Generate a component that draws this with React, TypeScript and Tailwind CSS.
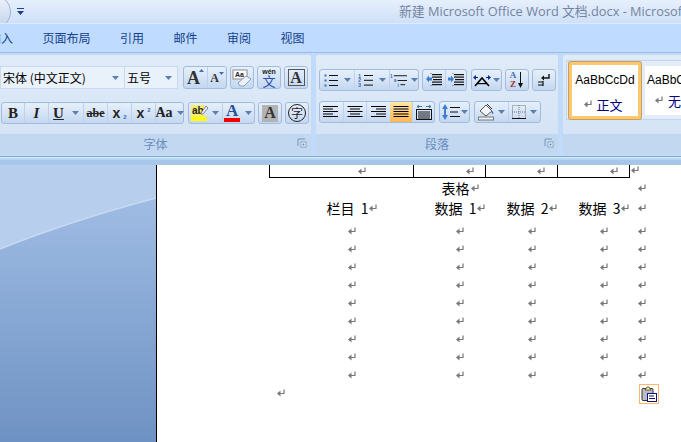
import React from "react";

const cjk = "font-['Noto_Sans_CJK_SC',sans-serif]";

function Ret({ className = "" }: { className?: string }) {
  return (
    <svg width="8" height="8" viewBox="0 0 8 8" className={`shrink-0 ${className}`}>
      <path d="M7 0.5V4.5H2" stroke="#777" strokeWidth="1.2" fill="none" />
      <path d="M3.5 1.5L0 4.5L3.5 7.5Z" fill="#777" />
    </svg>
  );
}

function Caret({ className = "" }: { className?: string }) {
  return (
    <svg width="7" height="4" viewBox="0 0 7 4" className={`shrink-0 ${className}`}>
      <path d="M0 0H7L3.5 4Z" fill="#5b7fb0" />
    </svg>
  );
}

function Group({ className = "", children }: { className?: string; children: React.ReactNode }) {
  return (
    <div className={`flex h-full rounded-[3px] border border-[#a3bbdc] bg-gradient-to-b from-[#e6f0fb] via-[#d6e4f6] to-[#c3d7f0] ${className}`}>
      {children}
    </div>
  );
}

function Cell({ className = "", children }: { className?: string; children?: React.ReactNode }) {
  return (
    <div className={`flex h-full items-center justify-center gap-[3px] border-l border-[#bfd1ea] first:border-l-0 ${className}`}>
      {children}
    </div>
  );
}

function Lines({ kind }: { kind: "left" | "center" | "right" | "justify" }) {
  const rows = [15, 10, 15, 10, 15];
  return (
    <svg width="16" height="12" viewBox="0 0 16 12">
      {rows.map((w, i) => {
        const width = kind === "justify" ? 15 : w;
        const left = kind === "center" ? (16 - width) / 2 : kind === "right" ? 16 - width : kind === "justify" ? 0.5 : 0;
        return <rect key={i} x={left} y={i * 2.5} width={width} height="1" fill="#000" />;
      })}
    </svg>
  );
}

function Launcher() {
  return (
    <svg width="10" height="10" viewBox="0 0 10 10">
      <path d="M1 8V1H8" stroke="#7b93b6" fill="none" />
      <rect x="4" y="4" width="5" height="5" fill="#fff" stroke="#7f9fc9" />
      <rect x="5.5" y="5.5" width="2" height="2" fill="#5b86bd" />
    </svg>
  );
}

function RibbonGroup({ label, className = "", launcher, children }: { label: string; className?: string; launcher?: boolean; children: React.ReactNode }) {
  return (
    <div className={`flex h-full shrink-0 flex-col overflow-hidden rounded-[3px] border border-[#c5d9f0] bg-gradient-to-b from-[#e0ebf8] to-[#d2e2f5] ${className}`}>
      <div className="flex-1">{children}</div>
      <div className={`flex h-[20px] items-center justify-center bg-[#c1d8f0] ${cjk} relative text-[12px] text-[#6a8cbf]`}>
        {label}
        {launcher && (
          <div className="absolute right-[4px] top-[4px] flex">
            <Launcher />
          </div>
        )}
      </div>
    </div>
  );
}

function FontGroup() {
  return (
    <RibbonGroup label="字体" launcher className="w-[312px] rounded-l-none border-l-0">
      <div className="mt-[11px] flex h-[23px] items-start">
        <div className={`flex h-[23px] w-[125px] items-center justify-between border border-[#c8daf0] bg-[#e9f1fb] pl-[2px] pr-[5px] ${cjk} text-[12px] text-black`}>
          宋体 (中文正文)
          <Caret />
        </div>
        <div className={`flex h-[23px] w-[53px] items-center justify-between border border-l-0 border-[#c8daf0] bg-[#e9f1fb] pl-[2px] pr-[5px] ${cjk} text-[12px] text-black`}>
          五号
          <Caret />
        </div>
        <Group className="ml-[5px] h-[22px] w-[44px]">
          <Cell className="w-[23px] font-['Liberation_Serif',serif] text-[18px] font-bold leading-none text-[#333]">
            <span className="relative pr-[4px]">
              A
              <svg width="5" height="3" viewBox="0 0 5 3" className="absolute right-0 top-0">
                <path d="M0 3H5L2.5 0Z" fill="#3f6fb0" />
              </svg>
            </span>
          </Cell>
          <Cell className="w-[19px] font-['Liberation_Serif',serif] text-[12px] font-bold leading-none text-[#333]">
            <span className="relative pr-[5px]">
              A
              <svg width="5" height="3" viewBox="0 0 5 3" className="absolute right-0 top-0">
                <path d="M0 0H5L2.5 3Z" fill="#3f6fb0" />
              </svg>
            </span>
          </Cell>
        </Group>
        <Group className="ml-[3px] h-[22px] w-[24px] items-center justify-center">
          <svg width="20" height="18" viewBox="0 0 20 18">
            <rect x="1" y="1" width="14" height="9" fill="#fff" stroke="#8a8a8a" />
            <text x="3" y="8" fontSize="7" fontWeight="bold" fontFamily="Liberation Sans" fill="#222">Aa</text>
            <path d="M6 14L14 7L19 10L12 17H8Z" fill="#eef1f6" stroke="#8ba0bd" />
          </svg>
        </Group>
        <Group className="ml-[3px] h-[22px] w-[24px] flex-col items-center justify-center font-['Liberation_Sans',sans-serif] leading-none">
          <span className="text-[7px] font-bold leading-[7px] text-[#222]">wén</span>
          <span className={`${cjk} text-[13px] leading-[12px] text-[#2a4fb0]`}>文</span>
        </Group>
        <Group className="ml-[3px] h-[22px] w-[24px] items-center justify-center">
          <span className="flex h-[17px] w-[17px] items-center justify-center border border-[#555] font-['Liberation_Serif',serif] text-[16px] font-bold leading-none text-[#333]">
            A
          </span>
        </Group>
      </div>
      <div className="mt-[13px] flex h-[22px] items-start">
        <Group className="ml-[1px] h-[22px] w-[183px] font-['Liberation_Serif',serif] leading-none text-[#222]">
          <Cell className="w-[22px] text-[15px] font-bold">B</Cell>
          <Cell className="w-[24px] text-[15px] font-bold italic">I</Cell>
          <Cell className="w-[35px] text-[15px] font-bold">
            <span className="underline">U</span>
            <Caret className="ml-[5px]" />
          </Cell>
          <Cell className="w-[24px] text-[12px] font-bold line-through">abe</Cell>
          <Cell className="w-[24px] gap-0 font-['Liberation_Sans',sans-serif] text-[14px] font-bold">
            x<span className="mt-[7px] text-[6px] text-[#3f6fb0]">2</span>
          </Cell>
          <Cell className="w-[24px] gap-0 font-['Liberation_Sans',sans-serif] text-[14px] font-bold">
            x<span className="mb-[7px] text-[6px] text-[#3f6fb0]">2</span>
          </Cell>
          <Cell className="w-[28px] gap-0 text-[14px] font-bold">
            Aa
            <Caret className="ml-[1px]" />
          </Cell>
        </Group>
        <Group className="ml-[4px] h-[22px] w-[67px]">
          <Cell className="w-[33px] gap-[2px]">
            <span className="relative flex w-[18px] flex-col items-start font-['Liberation_Sans',sans-serif] text-[10px] font-bold leading-[12px] text-[#222]">
              <span className="w-[13px] bg-[#f2ee6c] text-center">ab</span>
              <svg width="9" height="10" viewBox="0 0 9 10" className="absolute right-0 top-0">
                <path d="M1 8L6 1L8 3L3 9H1Z" fill="#eef3fa" stroke="#667" strokeWidth="0.8" />
              </svg>
              <span className="h-[4px] w-[16px] bg-[#ffff00]" />
            </span>
            <Caret />
          </Cell>
          <Cell className="w-[33px]">
            <span className="flex w-[16px] flex-col items-center font-['Liberation_Serif',serif] text-[17px] font-bold leading-[14px] text-[#2a4f98]">
              A
              <span className="h-[4px] w-[16px] bg-[#f00000]" />
            </span>
            <Caret className="ml-[2px]" />
          </Cell>
        </Group>
        <Group className="ml-[3px] h-[22px] w-[24px] items-center justify-center">
          <span className="flex h-[17px] w-[16px] items-center justify-center bg-[#b3b3b3] font-['Liberation_Serif',serif] text-[16px] font-bold leading-none text-[#333]">
            A
          </span>
        </Group>
        <Group className="ml-[3px] h-[22px] w-[24px] items-center justify-center">
          <span className={`flex h-[18px] w-[18px] items-center justify-center rounded-full border border-[#222] ${cjk} text-[12px] leading-none text-[#222]`}>
            字
          </span>
        </Group>
      </div>
    </RibbonGroup>
  );
}

const Dots = () => (
  <svg width="14" height="13" viewBox="0 0 14 13">
    {[1.5, 6.5, 11.5].map((y) => (
      <g key={y}>
        <rect x="0.5" y={y - 1} width="2" height="2" fill="#3f6fb0" />
        <rect x="5" y={y - 0.5} width="9" height="1" fill="#111" />
      </g>
    ))}
  </svg>
);

const Nums = () => (
  <svg width="15" height="14" viewBox="0 0 15 14">
    {["1", "2", "3"].map((n, i) => (
      <g key={n}>
        <text x="0" y={4.5 + i * 4.8} fontSize="5.5" fontWeight="bold" fontFamily="Liberation Sans" fill="#3f6fb0">{n}</text>
        <rect x="6" y={2 + i * 4.8} width="9" height="1" fill="#111" />
      </g>
    ))}
  </svg>
);

const Multi = () => (
  <svg width="18" height="14" viewBox="0 0 18 14">
    <text x="0" y="5" fontSize="5" fontWeight="bold" fontFamily="Liberation Sans" fill="#3f6fb0">1</text>
    <rect x="4" y="2" width="14" height="1" fill="#111" />
    <text x="4" y="9.5" fontSize="5" fontWeight="bold" fontFamily="Liberation Sans" fill="#3f6fb0">a</text>
    <rect x="8" y="7" width="10" height="1" fill="#111" />
    <text x="8" y="14" fontSize="5" fontWeight="bold" fontFamily="Liberation Sans" fill="#3f6fb0">i</text>
    <rect x="11" y="11.5" width="5" height="1" fill="#111" />
  </svg>
);

const Indent = ({ flip }: { flip?: boolean }) => (
  <svg width="16" height="14" viewBox="0 0 16 14">
    {[1, 3.5, 6, 8.5, 11].map((y, i) => (
      <rect key={y} x={i === 2 ? 7 : 6} y={y} width={i === 2 ? 9 : 10} height="1.2" fill="#111" />
    ))}
    <rect x="4.5" y="0" width="1" height="1" fill="#666" />
    <rect x="4.5" y="12" width="1" height="1" fill="#666" />
    {flip ? (
      <path d="M0 4.5H3V2.5L6 6L3 9.5V7.5H0Z" fill="#3f7fd0" />
    ) : (
      <path d="M6 4.5H3V2.5L0 6L3 9.5V7.5H6Z" fill="#3f7fd0" />
    )}
  </svg>
);

function ParagraphGroup() {
  return (
    <RibbonGroup label="段落" launcher className="w-[244px]">
      <div className="mt-[14px] flex h-[22px] items-start pl-[3px]">
        <Group className="h-[22px] w-[100px]">
          <Cell className="w-[34px]">
            <Dots />
            <Caret className="ml-[3px]" />
          </Cell>
          <Cell className="w-[35px]">
            <Nums />
            <Caret className="ml-[3px]" />
          </Cell>
          <Cell className="w-[29px] gap-0">
            <Multi />
            <Caret className="ml-[1px]" />
          </Cell>
        </Group>
        <Group className="ml-[3px] h-[22px] w-[45px]">
          <Cell className="w-[22px]">
            <Indent />
          </Cell>
          <Cell className="w-[21px]">
            <Indent flip />
          </Cell>
        </Group>
        <Group className="ml-[4px] h-[22px] w-[31px] items-center justify-center gap-[2px]">
          <svg width="18" height="13" viewBox="0 0 18 13">
            <path d="M2 12L9 4L16 12" stroke="#000" strokeWidth="1.6" fill="none" />
            <rect x="4" y="9" width="10" height="1.2" fill="#000" />
            <path d="M0 3H2V1L5 3.5L2 6V4H0Z" fill="#0b2a8a" transform="rotate(180 2.5 3.5)" />
            <path d="M13 3H15V1L18 3.5L15 6V4H13Z" fill="#0b2a8a" />
          </svg>
          <Caret />
        </Group>
        <Group className="ml-[3px] h-[22px] w-[24px] items-center justify-center gap-[1px] font-['Liberation_Serif',serif] leading-none">
          <span className="flex flex-col items-center text-[9px] font-bold leading-[9px]">
            <span className="text-[#3f6fb0]">A</span>
            <span className="text-[#a03030]">Z</span>
          </span>
          <svg width="7" height="17" viewBox="0 0 7 17">
            <path d="M3.5 0V12" stroke="#111" />
            <path d="M1 11H6L3.5 16Z" fill="#111" />
          </svg>
        </Group>
        <Group className="ml-[3px] h-[22px] w-[24px] items-center justify-center">
          <svg width="14" height="14" viewBox="0 0 14 14">
            <path d="M12 1V5H6" stroke="#111" strokeWidth="1.4" fill="none" />
            <path d="M7 2.5L4 5L7 7.5Z" fill="#111" />
            <path d="M6 8V13" stroke="#111" strokeWidth="1.2" />
            <path d="M1 9H6M1 12H6" stroke="#111" strokeWidth="1.2" />
          </svg>
        </Group>
      </div>
      <div className="mt-[10px] flex h-[22px] items-start pl-[3px]">
        <Group className="h-[22px] w-[116px]">
          <Cell className="w-[23px]"><Lines kind="left" /></Cell>
          <Cell className="w-[24px]"><Lines kind="center" /></Cell>
          <Cell className="w-[24px]"><Lines kind="right" /></Cell>
          <Cell className="w-[23px] border-l-0 bg-gradient-to-b from-[#fde7a8] to-[#fdb653]"><Lines kind="justify" /></Cell>
          <Cell className="w-[22px]">
            <svg width="16" height="16" viewBox="0 0 16 16">
              <path d="M1 2.5H6M1 2.5L3 1M1 2.5L3 4M15 2.5H10M15 2.5L13 1M15 2.5L13 4" stroke="#4a76b0" fill="none" />
              <rect x="0.5" y="5.5" width="15" height="10" fill="none" stroke="#111" />
              {[7.5, 9.5, 11.5, 13.5].map((y) => (
                <rect key={y} x="2" y={y} width="12" height="1" fill="#111" />
              ))}
            </svg>
          </Cell>
        </Group>
        <Group className="ml-[4px] h-[22px] w-[31px] items-center justify-center gap-[1px]">
          <svg width="18" height="16" viewBox="0 0 18 16">
            <path d="M3 0L6 5H4V11H6L3 16L0 11H2V5H0Z" fill="#3f7fd0" />
            <rect x="8" y="3" width="10" height="1" fill="#111" />
            <rect x="8" y="7.5" width="8" height="1" fill="#111" />
            <rect x="8" y="12" width="10" height="1" fill="#111" />
          </svg>
          <Caret />
        </Group>
        <Group className="ml-[4px] h-[22px] w-[67px]">
          <Cell className="w-[34px] gap-[3px]">
            <svg width="17" height="18" viewBox="0 0 17 18">
              <path d="M2 8L8 2L14 8L8 13Z" fill="#f5f5f5" stroke="#555" />
              <path d="M9 1L14 6" stroke="#333" />
              <path d="M13 7C15 8 16 10 15 11C14 11 13 9 13 7Z" fill="#3f6fb0" />
              <rect x="0.5" y="14" width="15" height="3" fill="#eef2f8" stroke="#777" />
            </svg>
            <Caret />
          </Cell>
          <Cell className="w-[32px] gap-[4px]">
            <svg width="14" height="14" viewBox="0 0 14 14">
              <rect x="0.5" y="0.5" width="13" height="13" fill="none" stroke="#777" strokeDasharray="1 1" />
              <path d="M7 0V13M0 7H14" stroke="#777" strokeDasharray="1 1" />
              <rect x="0" y="13" width="14" height="1" fill="#111" />
            </svg>
            <Caret />
          </Cell>
        </Group>
      </div>
    </RibbonGroup>
  );
}

function StylesGroup() {
  return (
    <div className="flex h-full flex-1 flex-col overflow-hidden rounded-l-[3px] border border-r-0 border-[#c5d9f0] bg-gradient-to-b from-[#e0ebf8] to-[#d2e2f5]">
      <div className="flex-1 pl-[3px] pt-[5px]">
        <div className="flex h-[60px] w-[200px] items-center border-y border-l border-[#c3d6ee] bg-[#e3edf9] pl-[2px]">
          <div className="flex h-[57px] w-[72px] shrink-0 flex-col items-center rounded-[2px] border-[3px] border-[#fbc870] bg-white shadow-[0_0_0_1px_#c79f60]">
            <span className="mt-[8px] font-['Liberation_Sans',sans-serif] text-[12px] leading-[15px] text-black">AaBbCcDd</span>
            <span className={`mt-[9px] flex items-center gap-[4px] pr-[3px] ${cjk} text-[13px] leading-[15px] text-[#00007f]`}>
              <Ret />
              正文
            </span>
          </div>
          <div className="ml-[4px] flex h-[49px] w-[90px] shrink-0 flex-col overflow-hidden bg-white pl-[2px]">
            <span className="mt-[7px] font-['Liberation_Sans',sans-serif] text-[12px] leading-[15px] text-black">AaBbCcDd</span>
            <span className={`mt-[5px] flex items-center gap-[5px] pl-[8px] ${cjk} text-[13px] leading-[15px] text-[#00007f]`}>
              <Ret />
              无间隔
            </span>
          </div>
        </div>
      </div>
      <div className="h-[20px] bg-[#c1d8f0]" />
    </div>
  );
}

function Paste() {
  return (
    <div className="absolute left-[482px] top-[219px] flex h-[20px] w-[20px] items-center justify-center border border-[#fbb868] bg-white">
      <svg width="16" height="16" viewBox="0 0 16 16">
        <rect x="1" y="2.5" width="11" height="12" rx="1" fill="#b9bcc4" stroke="#333" />
        <path d="M4 4L6 1H8L10 4Z" fill="#ffee80" stroke="#444" strokeWidth="0.8" />
        <rect x="6.5" y="7.5" width="9" height="8" fill="#fff" stroke="#10107f" />
        <path d="M8 10H13M8 12.5H14" stroke="#10107f" />
      </svg>
    </div>
  );
}

function MarkRow({ children, h = "h-[18px]" }: { children?: React.ReactNode; h?: string }) {
  const cell = "flex items-center justify-center";
  return (
    <div className={`ml-[123px] grid grid-cols-[144px_72px_72px_72px_8px] ${h}`}>
      {children ?? (
        <>
          <div className={cell}><Ret /></div>
          <div className={cell}><Ret /></div>
          <div className={cell}><Ret /></div>
          <div className={cell}><Ret /></div>
          <div className={`${cell} -ml-[4px]`}><Ret /></div>
        </>
      )}
    </div>
  );
}

function Page() {
  const head = "flex items-center justify-center gap-[1px] [word-spacing:3px]";
  return (
    <div className={`relative flex-1 overflow-hidden border-l border-black bg-white ${cjk} text-[14px] leading-none text-black`}>
      <div className="flex">
        <div className="ml-[112px] grid h-[13px] grid-cols-[144px_72px_72px_72px] border-b border-l border-black">
          <div className="flex items-center border-r border-black pl-[88px]"><Ret /></div>
          <div className="flex items-center border-r border-black pl-[52px]"><Ret /></div>
          <div className="flex items-center border-r border-black pl-[51px]"><Ret /></div>
          <div className="flex items-center border-r border-black pl-[52px]"><Ret /></div>
        </div>
        <Ret className="ml-[1px] mt-[1px]" />
      </div>
      <MarkRow h="h-[20px]">
        <div />
        <div className={head}>表格<Ret /></div>
        <div />
        <div />
        <div className="-ml-[4px] flex items-center justify-center"><Ret /></div>
      </MarkRow>
      <MarkRow h="h-[20px]">
        <div className={head}>栏目 1<Ret /></div>
        <div className={head}>数据 1<Ret /></div>
        <div className={head}>数据 2<Ret /></div>
        <div className={head}>数据 3<Ret /></div>
        <div className="-ml-[4px] flex items-center justify-center"><Ret /></div>
      </MarkRow>
      <div className="mt-[4px]">
        {[0, 1, 2, 3, 4, 5, 6, 7, 8].map((i) => (
          <MarkRow key={i} />
        ))}
      </div>
      <div className="flex h-[18px] items-center pl-[120px]">
        <Ret />
      </div>
      <Paste />
    </div>
  );
}

function Backdrop() {
  return (
    <div className="relative h-full w-[156px] shrink-0 overflow-hidden bg-gradient-to-b from-[#a6c2e8] to-[#6e92c3]">
      <svg width="156" height="277" viewBox="0 0 156 277" className="absolute left-0 top-0">
        <path d="M0 84Q70 56 156 33V0H0Z" fill="#b7cfed" />
        <path d="M0 84Q70 56 156 33" stroke="#c7daf2" strokeWidth="1.5" fill="none" />
      </svg>
    </div>
  );
}

export default function App() {
  return (
    <div className="flex h-[442px] w-[681px] flex-col overflow-hidden bg-white">
      <div className="flex h-[24px] shrink-0 items-center overflow-hidden border-b border-[#dcebfc] bg-gradient-to-b from-[#e6effc] to-[#cfe0f8]">
        <div className="-ml-[23px] h-[34px] w-[34px] shrink-0 rounded-full border border-[#9db4d4] bg-gradient-to-b from-[#eef3fb] to-[#c3d3ea]" />
        <svg width="7" height="7" viewBox="0 0 7 7" className="ml-[6px] shrink-0">
          <rect x="0" y="0" width="7" height="1" fill="#1f3f7f" />
          <path d="M0 3H7L3.5 7Z" fill="#1f3f7f" />
        </svg>
        <div className="ml-[375px] whitespace-nowrap font-['Open_Sans','Noto_Sans_CJK_SC',sans-serif] text-[12.8px] text-[#74849d]">
          新建 Microsoft Office Word 文档.docx - Microsoft Word
        </div>
      </div>
      <div className={`flex h-[29px] shrink-0 items-center gap-[29.5px] border-b border-[#9ebbdf] bg-[#bfdbff] ${cjk} text-[12px] text-[#15428b]`}>
        <span className="-ml-[11px]">插入</span>
        <span>页面布局</span>
        <span>引用</span>
        <span>邮件</span>
        <span>审阅</span>
        <span>视图</span>
      </div>
      <div className="flex h-[103px] shrink-0 gap-[3px] bg-[#bfdbff] pb-[1px] pt-[1px]">
        <FontGroup />
        <ParagraphGroup />
        <StylesGroup />
      </div>
      <div className="flex h-[9px] shrink-0 flex-col bg-[#a8c5ea]">
        <div className="h-[1px] bg-[#8aa7cb]" />
        <div className="h-[1px] bg-[#cdf0fb]" />
        <div className="h-[2px] bg-[#b9d6f2]" />
      </div>
      <div className="flex min-h-0 flex-1">
        <Backdrop />
        <Page />
      </div>
    </div>
  );
}
